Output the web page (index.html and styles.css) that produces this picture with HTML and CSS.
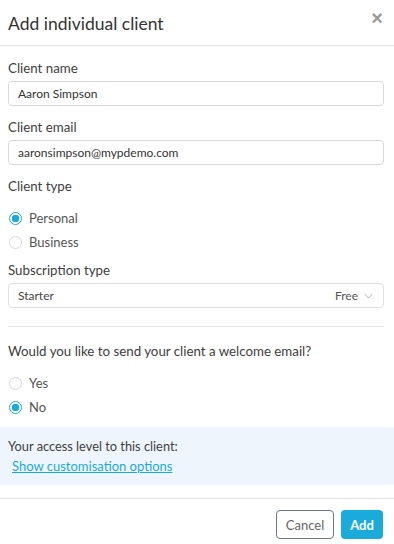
FILE: index.html
```html
<!DOCTYPE html>
<html lang="en">
<head>
    <meta charset="UTF-8">
    <meta name="viewport" content="width=device-width, initial-scale=1.0">
    <title>Add individual client</title>
    <link rel="stylesheet" href="styles.css">
</head>
<body>
    <div class="modal">
        <div class="modal-header">
            <h1>Add individual client</h1>
            <button class="close-btn">&times;</button>
        </div>

        <div class="modal-body">
            <div class="field">
                <label class="field-label">Client name</label>
                <input class="text-input" type="text" value="Aaron Simpson">
            </div>

            <div class="field">
                <label class="field-label">Client email</label>
                <input class="text-input" type="text" value="aaronsimpson@mypdemo.com">
            </div>

            <div class="field field-radios">
                <label class="field-label">Client type</label>
                <div class="radio-group">
                    <label class="radio checked"><span class="radio-dot"></span>Personal</label>
                    <label class="radio"><span class="radio-dot"></span>Business</label>
                </div>
            </div>

            <div class="field">
                <label class="field-label">Subscription type</label>
                <div class="select">
                    <span>Starter</span>
                    <span class="select-right">Free
                        <svg width="9" height="6" viewBox="0 0 9 6"><path d="M0.5 0.8 L4.5 5 L8.5 0.8" fill="none" stroke="#b5b5b5" stroke-width="1"/></svg>
                    </span>
                </div>
            </div>

            <hr class="divider">

            <div class="field field-last">
                <label class="field-label">Would you like to send your client a welcome email?</label>
                <div class="radio-group">
                    <label class="radio"><span class="radio-dot"></span>Yes</label>
                    <label class="radio checked"><span class="radio-dot"></span>No</label>
                </div>
            </div>
        </div>

        <div class="access-box">
            <p>Your access level to this client:</p>
            <a href="#">Show customisation options</a>
        </div>

        <div class="modal-footer">
            <button class="btn btn-cancel">Cancel</button>
            <button class="btn btn-add">Add</button>
        </div>
    </div>
</body>
</html>
```

FILE: styles.css
```css
:root {
    --blue: #1aabdb;
    --text: #3a3a3a;
    --border: #d9d9d9;
}

* {
    box-sizing: border-box;
    margin: 0;
    padding: 0;
}

body {
    font-family: Lato, 'Noto Sans', sans-serif;
    background: #fff;
    color: var(--text);
}

.modal {
    width: 394px;
    height: 544px;
    background: #fff;
}

.modal-header {
    display: flex;
    justify-content: space-between;
    align-items: center;
    height: 46px;
    padding: 1px 11px 0 8px;
    border-bottom: 1px solid #e3e3e3;
}

.modal-header h1 {
    font-size: 17.5px;
    font-weight: 400;
    color: #333;
}

.close-btn {
    background: none;
    border: none;
    color: #9a9a9a;
    font-size: 20px;
    font-weight: 700;
    line-height: 1;
    margin-top: -10px;
    cursor: pointer;
}

.modal-body {
    padding: 13px 10px 0 8px;
}

.field {
    margin-bottom: 12px;
}

.field-radios {
    margin-bottom: 10px;
}

.field-last {
    margin-bottom: 0;
}

.field-label {
    display: block;
    font-size: 13.3px;
    line-height: 18px;
    color: #404040;
    margin-bottom: 4px;
}

.text-input {
    width: 100%;
    height: 25px;
    padding: 0 9px;
    border: 1px solid var(--border);
    border-radius: 4px;
    font-family: inherit;
    font-size: 12px;
    color: #333;
}

.radio-group {
    display: flex;
    flex-direction: column;
    gap: 6px;
    padding-top: 10px;
}

.radio {
    display: flex;
    align-items: center;
    gap: 7px;
    font-size: 13px;
    color: #555;
    height: 18px;
}

.radio-dot {
    width: 13px;
    height: 13px;
    margin-left: 1px;
    border: 1px solid #d8d8d8;
    border-radius: 50%;
}

.radio.checked .radio-dot {
    border: 1.5px solid var(--blue);
    background: radial-gradient(circle, var(--blue) 0 3.5px, #fff 4px);
}

.select {
    display: flex;
    justify-content: space-between;
    align-items: center;
    height: 25px;
    padding: 0 10px 0 9px;
    border: 1px solid #e6dede;
    border-radius: 4px;
    font-size: 12px;
    color: #444;
}

.select-right {
    display: flex;
    align-items: center;
    gap: 6px;
    color: #555;
}

.divider {
    border: none;
    border-top: 1px solid #e3e3e3;
    margin: 18px 0 15px;
}

.access-box {
    background: #eff5fc;
    padding: 10px 8px;
    margin-top: 11px;
    font-size: 12.8px;
    line-height: 18px;
}

.access-box p {
    color: #404040;
    margin-bottom: 2px;
}

.access-box a {
    display: block;
    color: var(--blue);
    font-size: 13px;
    margin-left: 4px;
}

.modal-footer {
    display: flex;
    justify-content: flex-end;
    gap: 7px;
    margin-top: 13px;
    padding: 11px 11px 0;
    border-top: 1px solid #e3e3e3;
}

.btn {
    height: 29px;
    border-radius: 4px;
    font-family: inherit;
    font-size: 13px;
    cursor: pointer;
}

.btn-cancel {
    width: 58px;
    background: #fff;
    border: 1px solid #6e7781;
    color: #666;
}

.btn-add {
    width: 42px;
    background: var(--blue);
    border: none;
    color: #fff;
    font-weight: 700;
}
```
